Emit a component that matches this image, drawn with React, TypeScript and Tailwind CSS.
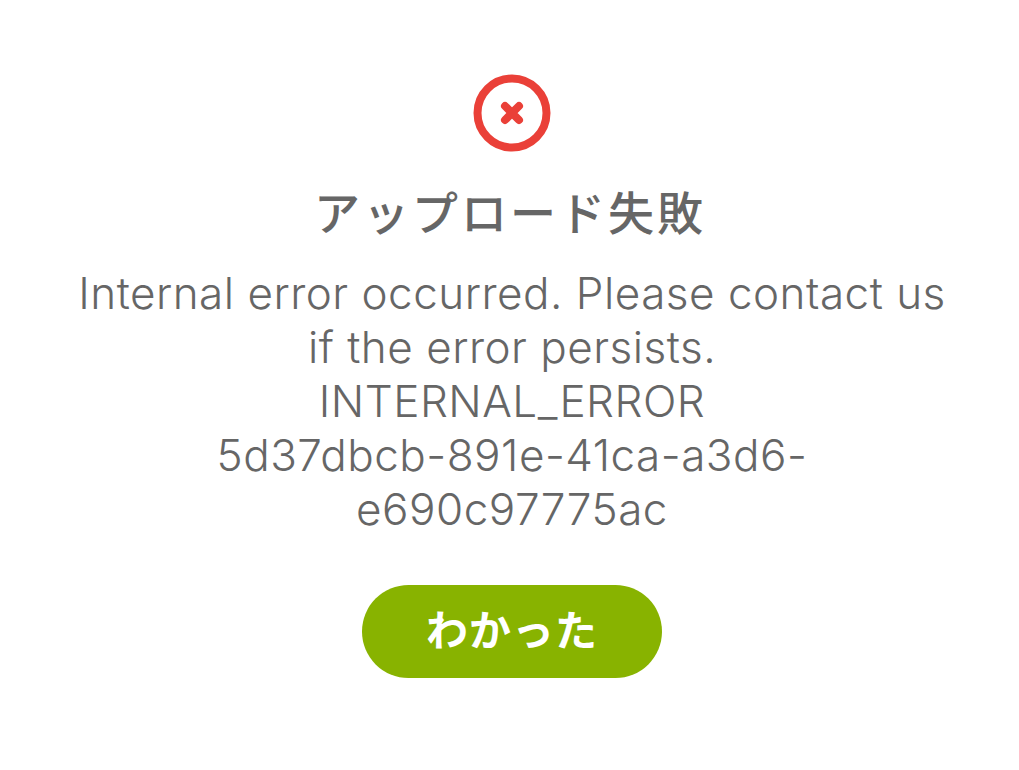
export default function App() {
  return (
    <div className="flex h-[770px] w-full flex-col items-center bg-white pl-[5px] pt-[74px] font-['Inter','Noto_Sans_CJK_JP',sans-serif] text-[#666666]">
      <svg width="78" height="78" viewBox="0 0 78 78" fill="none">
        <circle cx="39" cy="39" r="34.5" stroke="#ea4038" strokeWidth="8" />
        <path d="M32 32L46 46M46 32L32 46" stroke="#ea4038" strokeWidth="8" strokeLinecap="round" />
      </svg>
      <h1 className="mt-[31px] mr-[4px] text-[46px] leading-[60px] font-medium tracking-[3px]">アップロード失敗</h1>
      <p className="mt-[23px] w-[880px] text-center text-[44px] leading-[54px] font-light tracking-[0.5px]">
        Internal error occurred. Please contact us if the error persists.
        <br />
        INTERNAL_ERROR
        <br />
        5d37dbcb-891e-41ca-a3d6-e690c97775ac
      </p>
      <button className="mt-[49px] h-[93px] w-[300px] rounded-[46.5px] bg-[#88b300] pb-[2px] text-[42px] font-bold tracking-[1px] text-white">わかった</button>
    </div>
  );
}
